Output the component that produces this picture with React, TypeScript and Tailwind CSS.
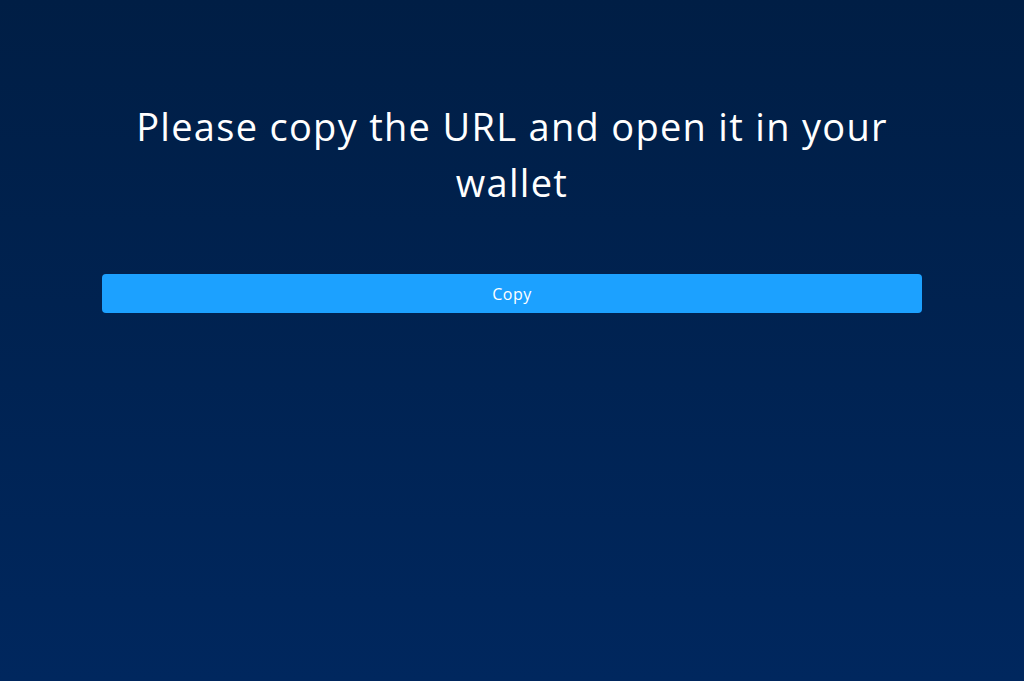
export default function App() {
  return (
    <div
      className="min-h-[681px] w-full bg-gradient-to-b from-[#001e45] to-[#00275e] flex flex-col items-center pt-[98px]"
      style={{ fontFamily: '"Open Sans", "Liberation Sans", sans-serif' }}
    >
      <div className="w-[820px] flex flex-col items-center">
        <h1 className="text-white text-[38px] leading-[56px] font-normal text-center px-[20px] tracking-[1.3px]">
          Please copy the URL and open it in your wallet
        </h1>
        <button className="mt-[64px] w-[820px] h-[39px] rounded-[4px] bg-[#1ca1ff] text-white text-[16px] font-medium tracking-[0.5px] flex items-center justify-center">
          Copy
        </button>
      </div>
    </div>
  );
}
